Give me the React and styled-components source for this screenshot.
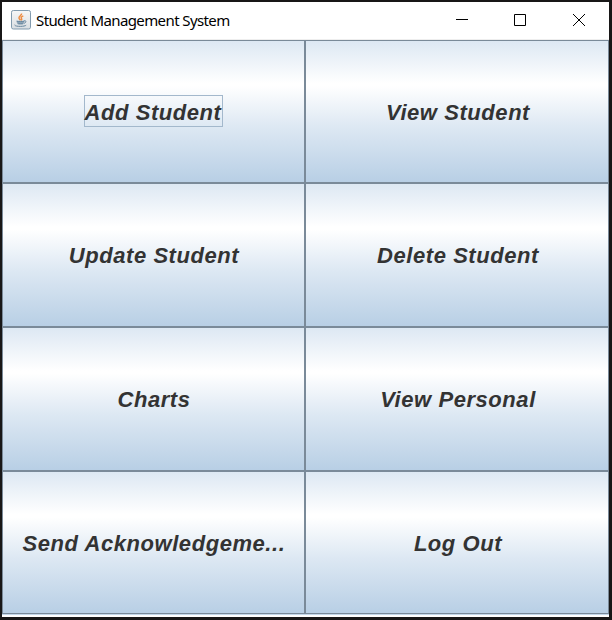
import React from 'react';
import styled, { createGlobalStyle } from 'styled-components';

const GlobalStyle = createGlobalStyle`
  body { margin: 0; background: #181818; }
  * { box-sizing: border-box; }
`;

const Desktop = styled.div`
  width: 612px;
  height: 620px;
  padding: 2px 3px 3px 2px;
  background: #181717;
`;

const Window = styled.main`
  height: 615px;
  display: flex;
  flex-direction: column;
  background: #fff;
`;

const TitleBar = styled.header`
  height: 38px;
  flex: none;
  display: flex;
  align-items: center;
  padding: 0 0 1px 9px;
  border-bottom: 1px solid #eeeeee;
`;

const Title = styled.h1`
  margin: 0 auto 0 5px;
  font: 400 15px/20px "Noto Sans", "Open Sans", sans-serif;
  letter-spacing: ${(p) => p.$tracking}px;
  color: #000;
  white-space: nowrap;
`;

const WindowControl = styled.button`
  width: 58px;
  height: 36px;
  padding: 0;
  border: 0;
  background: none;
  display: grid;
  place-items: center;

  &:last-child {
    margin-left: 1px;
  }
`;

const Controls = styled.div`
  display: flex;
  margin-right: 1px;
`;

const ButtonGrid = styled.section`
  display: grid;
  grid-template-columns: 303px 304px;
  grid-template-rows: 143px 144px 144px 143px;
  border-bottom: 1px solid #c4d8ea;
  flex: none;
`;

const MenuButton = styled.button`
  display: flex;
  align-items: center;
  justify-content: center;
  min-width: 0;
  padding: 0 0 2px;
  border: 1px solid #7a8a99;
  border-radius: 0;
  background: linear-gradient(#dde8f3 0%, #fff 30%, #fff 32%, #dde8f3 61%, #b8cfe5 100%);
  color: #333;
  font: italic 700 22px/34px "Liberation Sans", Arial, sans-serif;
  letter-spacing: 0.56px;

  &:nth-child(even) {
    padding-left: 1px;
  }
`;

const Label = styled.span`
  height: 32px;
  padding: 0 ${(p) => (p.$focused ? 1 : 0)}px 0 ${(p) => (p.$focused ? 0 : 1)}px;
  border: 1px solid ${(p) => (p.$focused ? '#a3b8cc' : 'transparent')};
  white-space: nowrap;
`;

const JavaIcon = () => (
  <svg width="20" height="20" viewBox="0 0 20 20" fill="none">
    <defs>
      <linearGradient id="tile" x1="0" y1="0" x2="0" y2="1">
        <stop stopColor="#f7f7f7" />
        <stop offset="1" stopColor="#d9dee2" />
      </linearGradient>
    </defs>
    <rect x=".5" y=".5" width="19" height="18.5" rx="1.8" fill="url(#tile)" stroke="#829bae" />
    <path d="M10.5 3.5C11 5.4 7.6 6 8 8c.1.9 1 1.5 1.5 2.3M12.3 5.9c-2.1.9-2.6 1.6-1.8 2.6.5.7.2 1.3-.4 1.8" stroke="#ed8c42" strokeWidth="1.5" />
    <path d="M5.5 10.8h7.7v.8c-.2 2.5-1 3-2 3.2H7.7c-1.3-.3-2-1.4-2.2-4Z" fill="#9aafbf" />
    <path d="M5.7 11.2c1.7.6 5.7.6 7.4 0M6.7 13c1.4.5 4 .5 5.6 0M13 10.9c2.6-.8 2.5 1.7.1 2.4M3.8 14.8c-1 1.9 9.6 2.1 11.4.4" stroke="#66859d" />
  </svg>
);

const actions = [
  'Add Student', 'View Student', 'Update Student', 'Delete Student',
  'Charts', 'View Personal', 'Send Acknowledgeme...', 'Log Out',
];

const controls = [
  { name: 'Minimize', path: 'M0 5.5H12' },
  { name: 'Maximize', path: 'M.5.5H11.5V11.5H.5Z' },
  { name: 'Close', path: 'M0 0L12 12M12 0L0 12' },
];

export default function App() {
  return (
    <>
      <GlobalStyle />
      <Desktop>
        <Window>
          <TitleBar>
            <JavaIcon />
            <Title $tracking={-0.6}>Student Management System</Title>
            <Controls>
              {controls.map(({ name, path }) => (
                <WindowControl key={name} aria-label={name}>
                  <svg width="12" height="12" viewBox="0 0 12 12" fill="none">
                    <path d={path} stroke="#000" />
                  </svg>
                </WindowControl>
              ))}
            </Controls>
          </TitleBar>
          <ButtonGrid>
            {actions.map((label, index) => (
              <MenuButton key={label}>
                <Label $focused={index === 0}>{label}</Label>
              </MenuButton>
            ))}
          </ButtonGrid>
        </Window>
      </Desktop>
    </>
  );
}
